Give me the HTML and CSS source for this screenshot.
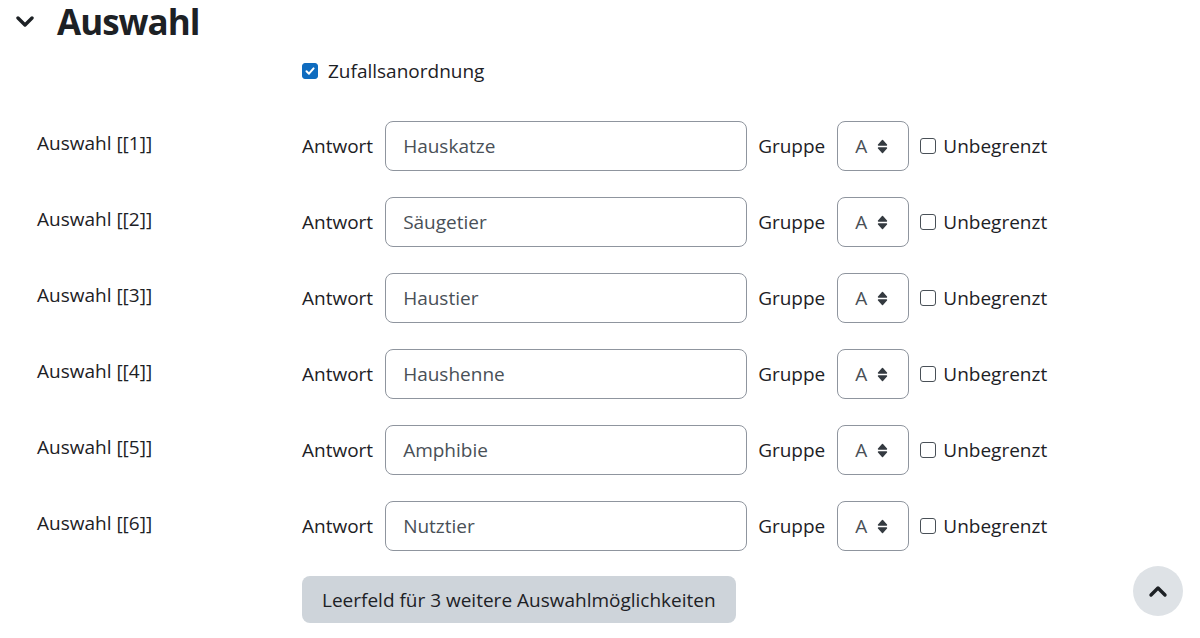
FILE: index.html
```html
<!DOCTYPE html>
<html lang="de">
<head>
<meta charset="UTF-8">
<title>Auswahl</title>
<link rel="stylesheet" href="styles.css">
</head>
<body>
    <div class="section">
        <div class="section-head">
            <svg class="chevron" width="20" height="12" viewBox="0 0 20 12"><path d="M3 2 L10 9 L17 2" fill="none" stroke="#1d2125" stroke-width="3.4" stroke-linecap="round" stroke-linejoin="round"/></svg>
            <h2>Auswahl</h2>
        </div>

        <div class="row row-shuffle">
            <div class="label"></div>
            <label class="check"><span class="box checked"><svg width="12" height="12" viewBox="0 0 12 12"><path d="M2.5 6.2 L5 8.7 L9.6 3.4" fill="none" stroke="#fff" stroke-width="2" stroke-linecap="round" stroke-linejoin="round"/></svg></span>Zufallsanordnung</label>
        </div>

        <div class="row">
            <div class="label">Auswahl [[1]]</div>
            <div class="fields">
                <span>Antwort</span>
                <div class="input">Hauskatze</div>
                <span>Gruppe</span>
                <div class="select">A <svg class="arrows" width="11" height="15" viewBox="0 0 11 15"><path d="M1.5 6 L5.5 1.5 L9.5 6 Z M1.5 9 L5.5 13.5 L9.5 9 Z" fill="#343a40" stroke="#343a40" stroke-width="1.4" stroke-linejoin="round"/></svg></div>
                <label class="check small"><span class="box"></span>Unbegrenzt</label>
            </div>
        </div>
        <div class="row">
            <div class="label">Auswahl [[2]]</div>
            <div class="fields">
                <span>Antwort</span>
                <div class="input">Säugetier</div>
                <span>Gruppe</span>
                <div class="select">A <svg class="arrows" width="11" height="15" viewBox="0 0 11 15"><path d="M1.5 6 L5.5 1.5 L9.5 6 Z M1.5 9 L5.5 13.5 L9.5 9 Z" fill="#343a40" stroke="#343a40" stroke-width="1.4" stroke-linejoin="round"/></svg></div>
                <label class="check small"><span class="box"></span>Unbegrenzt</label>
            </div>
        </div>
        <div class="row">
            <div class="label">Auswahl [[3]]</div>
            <div class="fields">
                <span>Antwort</span>
                <div class="input">Haustier</div>
                <span>Gruppe</span>
                <div class="select">A <svg class="arrows" width="11" height="15" viewBox="0 0 11 15"><path d="M1.5 6 L5.5 1.5 L9.5 6 Z M1.5 9 L5.5 13.5 L9.5 9 Z" fill="#343a40" stroke="#343a40" stroke-width="1.4" stroke-linejoin="round"/></svg></div>
                <label class="check small"><span class="box"></span>Unbegrenzt</label>
            </div>
        </div>
        <div class="row">
            <div class="label">Auswahl [[4]]</div>
            <div class="fields">
                <span>Antwort</span>
                <div class="input">Haushenne</div>
                <span>Gruppe</span>
                <div class="select">A <svg class="arrows" width="11" height="15" viewBox="0 0 11 15"><path d="M1.5 6 L5.5 1.5 L9.5 6 Z M1.5 9 L5.5 13.5 L9.5 9 Z" fill="#343a40" stroke="#343a40" stroke-width="1.4" stroke-linejoin="round"/></svg></div>
                <label class="check small"><span class="box"></span>Unbegrenzt</label>
            </div>
        </div>
        <div class="row">
            <div class="label">Auswahl [[5]]</div>
            <div class="fields">
                <span>Antwort</span>
                <div class="input">Amphibie</div>
                <span>Gruppe</span>
                <div class="select">A <svg class="arrows" width="11" height="15" viewBox="0 0 11 15"><path d="M1.5 6 L5.5 1.5 L9.5 6 Z M1.5 9 L5.5 13.5 L9.5 9 Z" fill="#343a40" stroke="#343a40" stroke-width="1.4" stroke-linejoin="round"/></svg></div>
                <label class="check small"><span class="box"></span>Unbegrenzt</label>
            </div>
        </div>
        <div class="row">
            <div class="label">Auswahl [[6]]</div>
            <div class="fields">
                <span>Antwort</span>
                <div class="input">Nutztier</div>
                <span>Gruppe</span>
                <div class="select">A <svg class="arrows" width="11" height="15" viewBox="0 0 11 15"><path d="M1.5 6 L5.5 1.5 L9.5 6 Z M1.5 9 L5.5 13.5 L9.5 9 Z" fill="#343a40" stroke="#343a40" stroke-width="1.4" stroke-linejoin="round"/></svg></div>
                <label class="check small"><span class="box"></span>Unbegrenzt</label>
            </div>
        </div>

        <div class="row row-button">
            <div class="label"></div>
            <div><button type="button">Leerfeld für 3 weitere Auswahlmöglichkeiten</button></div>
        </div>
    </div>

    <a class="to-top" href="#"><svg width="22" height="14" viewBox="0 0 22 14"><path d="M4 11 L11 4 L18 11" fill="none" stroke="#1d2125" stroke-width="3.4" stroke-linecap="round" stroke-linejoin="round"/></svg></a>
</body>
</html>
```

FILE: styles.css
```css
body {
    margin: 0;
    font-family: "Open Sans", "Noto Sans", sans-serif;
    font-size: 19px;
    color: #1d2125;
    background: #fff;
    height: 638px;
    overflow: hidden;
    position: relative;
}

.section-head {
    display: flex;
    align-items: center;
    height: 38px;
    padding-top: 3px;
    margin-bottom: 1px;
    padding-left: 15px;
}

.section-head .chevron {
    margin-right: 22px;
    margin-top: 0;
}

.section-head h2 {
    margin: 0;
    font-size: 35px;
    line-height: 38px;
    font-weight: 700;
    letter-spacing: -1px;
}

.row {
    display: grid;
    grid-template-columns: 265px 1fr;
    padding-left: 37px;
    height: 76px;
    align-items: center;
}

.row-shuffle {
    height: 58px;
    margin-bottom: 8px;
}

.label {
    align-self: start;
    padding-top: 22px;
}

.row-shuffle .label {
    padding-top: 0;
}

.fields {
    display: flex;
    align-items: center;
}

.fields > span {
    margin-right: 12px;
}

.input {
    width: 343px;
    height: 48px;
    line-height: 48px;
    padding-left: 17px;
    border: 1px solid #8f959e;
    border-radius: 8px;
    color: #495057;
    margin-right: 11px;
}

.select {
    width: 53px;
    height: 48px;
    line-height: 48px;
    padding-left: 17px;
    border: 1px solid #8f959e;
    border-radius: 8px;
    color: #495057;
    margin-right: 11px;
    display: flex;
    align-items: center;
}

.arrows {
    margin-left: 10px;
}

.check {
    display: flex;
    align-items: center;
}

.box {
    width: 16px;
    height: 16px;
    border: 1px solid #495057;
    border-radius: 3px;
    box-sizing: border-box;
    margin-right: 10px;
    display: flex;
    align-items: center;
    justify-content: center;
}

.box.checked {
    background: #0f6cbf;
    border-color: #0f6cbf;
}

.check.small .box {
    margin-right: 7px;
}

.row-button {
    height: 60px;
    margin-top: 12px;
    align-items: start;
}

button {
    font-family: inherit;
    font-size: 19px;
    color: #1d2125;
    background: #ced4da;
    border: none;
    border-radius: 8px;
    padding: 0 20px;
    height: 47px;
}

.to-top {
    position: absolute;
    left: 1133px;
    top: 566px;
    width: 50px;
    height: 50px;
    border-radius: 50%;
    background: #dee2e6;
    display: flex;
    align-items: center;
    justify-content: center;
}
```
